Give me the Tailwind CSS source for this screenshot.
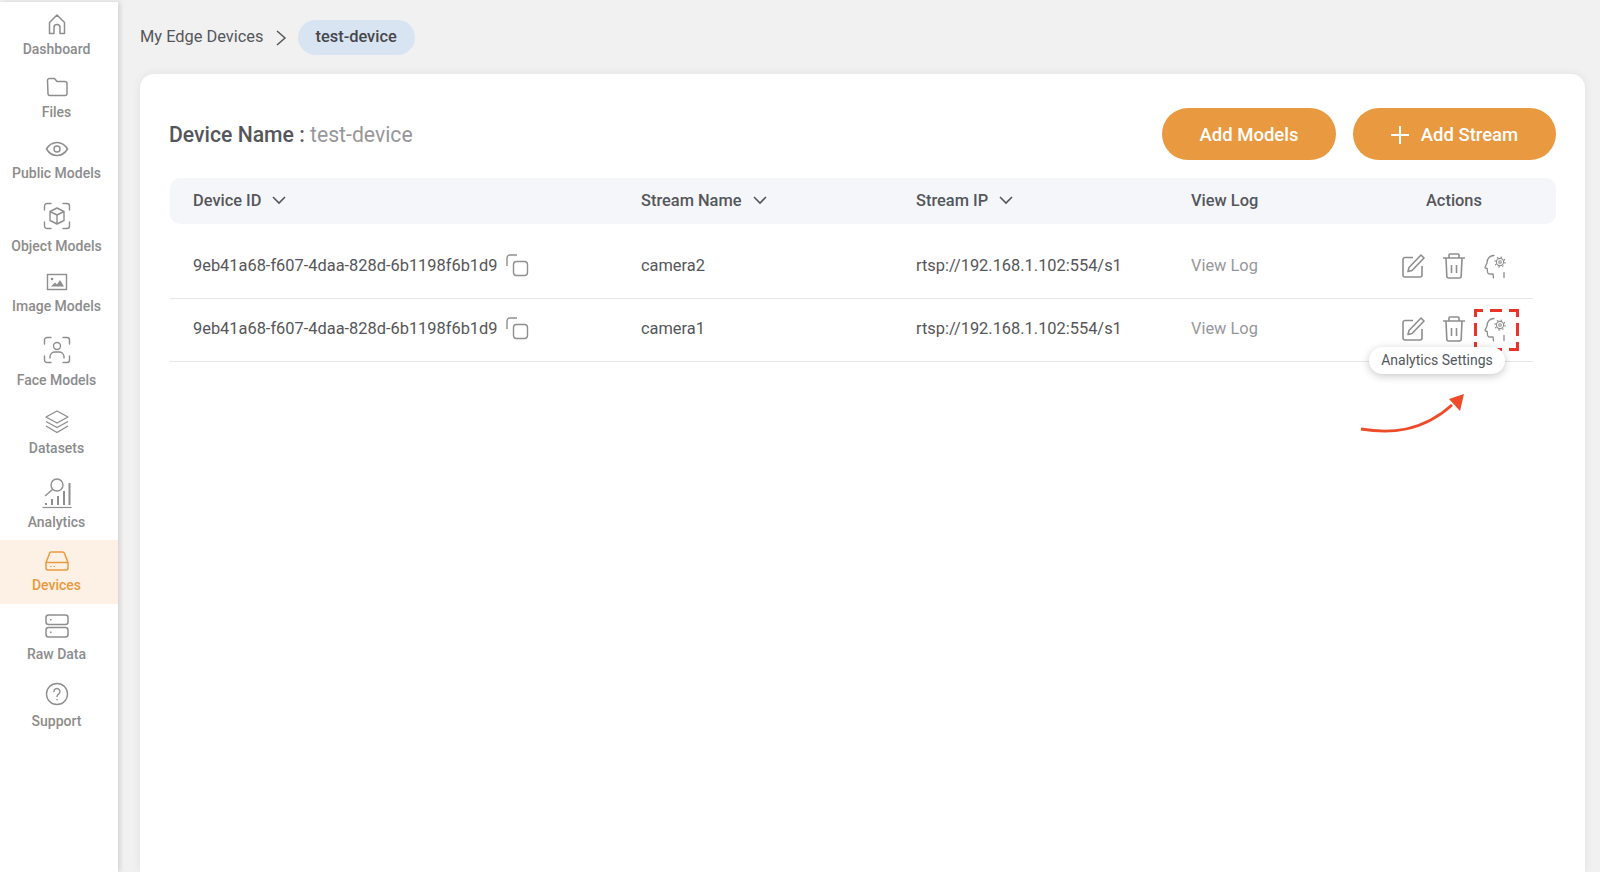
<!DOCTYPE html>
<html lang="en">
<head>
    <meta charset="UTF-8">
    <title>Device</title>
    <script src="https://cdn.jsdelivr.net/npm/@tailwindcss/browser@4"></script>
</head>
<body class="bg-[#f1f1f1] font-[Roboto,sans-serif] h-screen overflow-hidden">
<div class="flex h-[872px]">

    <!-- Sidebar -->
    <aside class="w-[118px] shrink-0 mt-[2px] pr-0 bg-white shadow-[2px_0_5px_rgba(0,0,0,0.13)] text-[#8c8c8c] text-[14px] font-medium leading-4">
        <a class="flex flex-col items-center h-[57px] pt-[10px] pr-[5px]">
            <svg class="w-6 h-6 mb-[5px]" viewBox="0 0 24 24" fill="none" stroke="#8e8e8e" stroke-width="1.5" stroke-linejoin="round"><path d="M4.5 21.5V10.5L12 3l7.5 7.5v11h-4.5v-6a3 3 0 0 0-6 0v6z"/></svg>
            <span>Dashboard</span>
        </a>
        <a class="flex flex-col items-center h-[62px] pt-[16px] pr-[5px]">
            <svg class="w-6 h-6 mb-[5px]" viewBox="0 0 24 24" fill="none" stroke="#8e8e8e" stroke-width="1.5" stroke-linejoin="round"><path d="M2.5 5.5a2 2 0 0 1 2-2h5l2.500 3h8a2 2 0 0 1 2 2v10a2 2 0 0 1-2 2h-15a2 2 0 0 1-2-2z"/></svg>
            <span>Files</span>
        </a>
        <a class="flex flex-col items-center h-[65px] pt-[16px] pr-[5px]">
            <svg class="w-6 h-6 mb-[4px]" viewBox="0 0 24 24" fill="none" stroke="#8e8e8e" stroke-width="1.5"><path d="M1.500 12C4 7.800 7.700 5.500 12 5.500s8 2.300 10.500 6.500c-2.500 4.200-6.200 6.500-10.500 6.500S4 16.200 1.500 12z"/><circle cx="12" cy="12" r="3"/></svg>
            <span>Public Models</span>
        </a>
        <a class="flex flex-col items-center h-[68px] pt-[16px] pr-[5px]">
            <svg class="w-7 h-7 mb-[8px]" viewBox="0 0 28 28" fill="none" stroke="#8e8e8e" stroke-width="1.400" stroke-linecap="round" stroke-linejoin="round"><path d="M1.500 8V4a2.500 2.500 0 0 1 2.500-2.500h4M20 1.500h4A2.500 2.500 0 0 1 26.500 4v4M26.500 20v4a2.500 2.500 0 0 1-2.500 2.500h-4M8 26.500H4A2.500 2.500 0 0 1 1.500 24v-4"/><path d="M14 6l7 3.500v9L14 22l-7-3.500v-9zM7 9.500l7 3.500 7-3.500M14 13v9"/></svg>
            <span>Object Models</span>
        </a>
        <a class="flex flex-col items-center h-[65px] pt-[16px] pr-[5px]">
            <svg class="w-6 h-6 mb-[4px]" viewBox="0 0 24 24" fill="none" stroke="#8e8e8e" stroke-width="1.400"><rect x="2.500" y="4.500" width="19" height="15"/><path d="M6 16.500l4-4 2 2 3-4.500 4 6.500z" fill="#8e8e8e" stroke="none"/><circle cx="7" cy="9" r="1.300" fill="#8e8e8e" stroke="none"/></svg>
            <span>Image Models</span>
        </a>
        <a class="flex flex-col items-center h-[76px] pt-[17px] pr-[5px]">
            <svg class="w-7 h-7 mb-[8px]" viewBox="0 0 28 28" fill="none" stroke="#8e8e8e" stroke-width="1.400" stroke-linecap="round" stroke-linejoin="round"><path d="M1.500 8V4a2.500 2.500 0 0 1 2.500-2.500h4M20 1.500h4A2.500 2.500 0 0 1 26.500 4v4M26.500 20v4a2.500 2.500 0 0 1-2.500 2.500h-4M8 26.500H4A2.500 2.500 0 0 1 1.500 24v-4"/><circle cx="14" cy="10" r="3.500"/><path d="M7 22v-1.500a5 5 0 0 1 5-4.500h4a5 5 0 0 1 5 4.500V22"/></svg>
            <span>Face Models</span>
        </a>
        <a class="flex flex-col items-center h-[67px] pt-[14px] pr-[5px]">
            <svg class="w-[26px] h-[26px] mb-[5px]" viewBox="0 0 26 26" fill="none" stroke="#8e8e8e" stroke-width="1.400" stroke-linejoin="round"><path d="M13 2l11 6-11 6L2 8z"/><path d="M2 12.500l11 6 11-6M2 17l11 6.500L24 17"/></svg>
            <span>Datasets</span>
        </a>
        <a class="flex flex-col items-center h-[78px] pt-[15px] pr-[5px]">
            <svg class="w-[32px] h-[32px] mb-[5px]" viewBox="0 0 32 32" fill="none" stroke="#8e8e8e" stroke-width="1.400"><circle cx="16" cy="8" r="6"/><path d="M11.500 12.500L4 19"/><path d="M1.500 30.500h29" stroke-width="1.200"/><path d="M5 28v-2M11 28v-6M17 28v-9M23 28V14M28.500 28V6" stroke-width="2"/></svg>
            <span>Analytics</span>
        </a>
        <a class="flex flex-col items-center h-[64px] pt-[9px] pr-[5px] bg-[#fdf1e5] text-[#e99a3e]">
            <svg class="w-6 h-6 mb-[4px]" viewBox="0 0 24 24" fill="none" stroke="#e99a3e" stroke-width="1.500" stroke-linejoin="round"><path d="M1 13.500L4.500 4.500a2 2 0 0 1 2-1.500h11a2 2 0 0 1 2 1.500l3.500 9V19a2 2 0 0 1-2 2H3a2 2 0 0 1-2-2z"/><path d="M1 13.500h22"/><path d="M5 17.500h1.500M8.500 17.500H10" stroke-width="1.200"/></svg>
            <span>Devices</span>
        </a>
        <a class="flex flex-col items-center h-[68px] pt-[10px] pr-[5px]">
            <svg class="w-6 h-6 mb-[8px]" viewBox="0 0 24 24" fill="none" stroke="#8e8e8e" stroke-width="1.500"><rect x="1" y="1" width="22" height="9.500" rx="2.500"/><rect x="1" y="13.500" width="22" height="9.500" rx="2.500"/><path d="M5 5.700h1.500M5 18.200h1.500"/></svg>
            <span>Raw Data</span>
        </a>
        <a class="flex flex-col items-center h-[68px] pt-[10px] pr-[5px]">
            <svg class="w-6 h-6 mb-[7px]" viewBox="0 0 24 24" fill="none" stroke="#8e8e8e" stroke-width="1.400" stroke-linecap="round"><circle cx="12" cy="12" r="10.500"/><path d="M9 9.500a3 3 0 1 1 4.800 2.400c-1.100.8-1.800 1.400-1.800 2.600"/><path d="M12 17.500v.2"/></svg>
            <span>Support</span>
        </a>
    </aside>

    <!-- Main -->
    <main class="flex-1 min-w-0 pl-[22px] pr-[15px] flex flex-col">
        <div class="h-[74px] shrink-0 flex items-center gap-[11px] pt-[1px] text-[16.4px] text-[#55565a]">
            <span>My Edge Devices</span>
            <svg class="w-[12px] h-[18px]" viewBox="0 0 12 18" fill="none" stroke="#55565a" stroke-width="1.500"><path d="M2 2l8 7-8 7"/></svg>
            <span class="h-[35px] px-[18px] flex items-center rounded-full bg-[#d9e4f3] font-medium text-[#45474b]">test-device</span>
        </div>

        <section class="flex-1 bg-white rounded-t-[14px] shadow-[0_0_10px_rgba(0,0,0,0.07)] pt-[34px] pl-[30px] pr-[29px]">
            <div class="flex items-center justify-between h-[52px] mb-[18px]">
                <h1 class="text-[21.2px] font-medium text-[#55565a] -ml-[1px] pt-[1px]">Device Name : <span class="font-normal text-[#97979a]">test-device</span></h1>
                <div class="flex gap-[17px]">
                    <button class="w-[174px] h-[52px] pt-[3px] rounded-full bg-[#e9993f] text-white text-[18.5px] font-medium">Add Models</button>
                    <button class="w-[203px] h-[52px] rounded-full bg-[#e9993f] text-white text-[18.5px] font-medium flex items-center justify-center gap-[12px]">
                        <svg class="w-[18px] h-[18px] mt-[2px]" viewBox="0 0 18 18" fill="none" stroke="white" stroke-width="2"><path d="M9 0v18M0 9h18"/></svg>
                        <span class="pt-[3px]">Add Stream</span>
                    </button>
                </div>
            </div>

            <div class="grid grid-cols-[448px_275px_275px_1fr] items-center h-[46px] pl-[23px] rounded-[10px] bg-[#f5f6fa] text-[16.4px] font-medium text-[#55565a]">
                <div class="flex items-center gap-[11px]">Device ID <svg class="w-[14px] h-[9px]" viewBox="0 0 14 9" fill="none" stroke="#55565a" stroke-width="1.600"><path d="M1 1l6 6 6-6"/></svg></div>
                <div class="flex items-center gap-[11px]">Stream Name <svg class="w-[14px] h-[9px]" viewBox="0 0 14 9" fill="none" stroke="#55565a" stroke-width="1.600"><path d="M1 1l6 6 6-6"/></svg></div>
                <div class="flex items-center gap-[11px]">Stream IP <svg class="w-[14px] h-[9px]" viewBox="0 0 14 9" fill="none" stroke="#55565a" stroke-width="1.600"><path d="M1 1l6 6 6-6"/></svg></div>
                <div class="grid grid-cols-[235px_1fr] items-center">
                    <span>View Log</span>
                    <span>Actions</span>
                </div>
            </div>

            <!-- Row 1 -->
            <div class="grid grid-cols-[448px_275px_275px_1fr] items-center w-[1363px] h-[75px] pt-[10px] pl-[23px] border-b border-[#e6e6e6] text-[16.4px] text-[#55565a]">
                <div class="flex items-center gap-[8px]">
                    <span>9eb41a68-f607-4daa-828d-6b1198f6b1d9</span>
                    <svg class="w-[23px] h-[23px]" viewBox="0 0 23 23" fill="none" stroke="#8e8e8e" stroke-width="1.400"><path d="M1 12V4a3 3 0 0 1 3-3h7"/><rect x="7.500" y="7.500" width="14" height="14" rx="3"/></svg>
                </div>
                <div>camera2</div>
                <div>rtsp://192.168.1.102:554/s1</div>
                <div class="flex items-center">
                    <span class="w-[211px] text-[#97979a]">View Log</span>
                    <div class="flex items-center gap-[18px]">
                        <svg class="w-[23px] h-[24px]" viewBox="0 0 23 24" fill="none" stroke="#8e8e8e" stroke-width="1.600" stroke-linejoin="round"><path d="M11 3.500H3A2 2 0 0 0 1 5.500V21a2 2 0 0 0 2 2h15a2 2 0 0 0 2-2v-9"/><path d="M19 1l3 3L10 16.500l-4 1 1-4z"/></svg>
                        <svg class="w-[22px] h-[26px]" viewBox="0 0 22 26" fill="none" stroke="#8e8e8e" stroke-width="1.600" stroke-linejoin="round"><path d="M0 5h22M6 5V2a1 1 0 0 1 1-1h8a1 1 0 0 1 1 1v3M3 5l.8 18a2 2 0 0 0 2 2h10.400a2 2 0 0 0 2-2L19 5M8.500 12v8M13.500 12v8"/></svg>
                        <svg class="w-[23px] h-[26px] ml-[1px]" viewBox="0 0 23 26" fill="none" stroke="#8e8e8e" stroke-width="1.300" stroke-linecap="round" stroke-linejoin="round"><path d="M10 2.500C6 2.500 3 5.500 3 10L1 14.500c.3.800 1.200.9 2.200 1l.3 3.500c.2 1.500 1.500 2.200 3 2l2.500-.2.500 4M20 19.500v5"/><circle cx="16" cy="9" r="1.300" stroke-width="1.100"/><circle cx="16" cy="9" r="3.600" stroke-width="1.100"/><circle cx="16" cy="9" r="5" stroke-width="1.300" stroke-dasharray="1.500 2.430" stroke-linecap="butt"/></svg>
                    </div>
                </div>
            </div>

            <!-- Row 2 -->
            <div class="grid grid-cols-[448px_275px_275px_1fr] items-center w-[1363px] h-[63px] pb-[2px] pl-[23px] border-b border-[#e6e6e6] text-[16.4px] text-[#55565a]">
                <div class="flex items-center gap-[8px]">
                    <span>9eb41a68-f607-4daa-828d-6b1198f6b1d9</span>
                    <svg class="w-[23px] h-[23px]" viewBox="0 0 23 23" fill="none" stroke="#8e8e8e" stroke-width="1.400"><path d="M1 12V4a3 3 0 0 1 3-3h7"/><rect x="7.500" y="7.500" width="14" height="14" rx="3"/></svg>
                </div>
                <div>camera1</div>
                <div>rtsp://192.168.1.102:554/s1</div>
                <div class="flex items-center">
                    <span class="w-[211px] text-[#97979a]">View Log</span>
                    <div class="relative flex items-center gap-[18px]">
                        <svg class="w-[23px] h-[24px]" viewBox="0 0 23 24" fill="none" stroke="#8e8e8e" stroke-width="1.600" stroke-linejoin="round"><path d="M11 3.500H3A2 2 0 0 0 1 5.500V21a2 2 0 0 0 2 2h15a2 2 0 0 0 2-2v-9"/><path d="M19 1l3 3L10 16.500l-4 1 1-4z"/></svg>
                        <svg class="w-[22px] h-[26px]" viewBox="0 0 22 26" fill="none" stroke="#8e8e8e" stroke-width="1.600" stroke-linejoin="round"><path d="M0 5h22M6 5V2a1 1 0 0 1 1-1h8a1 1 0 0 1 1 1v3M3 5l.8 18a2 2 0 0 0 2 2h10.400a2 2 0 0 0 2-2L19 5M8.500 12v8M13.500 12v8"/></svg>
                        <svg class="w-[23px] h-[26px] ml-[1px]" viewBox="0 0 23 26" fill="none" stroke="#8e8e8e" stroke-width="1.300" stroke-linecap="round" stroke-linejoin="round"><path d="M10 2.500C6 2.500 3 5.500 3 10L1 14.500c.3.800 1.200.9 2.200 1l.3 3.500c.2 1.500 1.500 2.200 3 2l2.500-.2.500 4M20 19.500v5"/><circle cx="16" cy="9" r="1.300" stroke-width="1.100"/><circle cx="16" cy="9" r="3.600" stroke-width="1.100"/><circle cx="16" cy="9" r="5" stroke-width="1.300" stroke-dasharray="1.500 2.430" stroke-linecap="butt"/></svg>

                        <!-- annotation -->
                        <svg class="absolute left-[72px] top-[-7px] w-[45px] h-[42px]" viewBox="0 0 45 42" fill="none" stroke="#e8352a" stroke-width="3"><path d="M1.500 8V1.500H9M16 1.500H28M35 1.500H43.500V8M43.500 14V27M43.500 33V40.500H35M28 40.500H16M9 40.500H1.500V33M1.500 27V14"/></svg>
                        <div class="absolute left-[-33px] top-[31px] w-[136px] h-[27px] rounded-full bg-white shadow-[0_2px_8px_rgba(0,0,0,0.22)] flex items-center justify-center text-[14px] text-[#55565a] whitespace-nowrap">Analytics Settings</div>
                        <svg class="absolute left-[-42px] top-[74px] w-[106px] h-[50px]" viewBox="0 0 106 50" fill="none"><path d="M1 39C30 44 62 42 92 15" stroke="#ee4b2b" stroke-width="2.800"/><path d="M104 4L100 21 89 9z" fill="#ee4b2b"/></svg>
                    </div>
                </div>
            </div>
        </section>
    </main>
</div>
</body>
</html>
